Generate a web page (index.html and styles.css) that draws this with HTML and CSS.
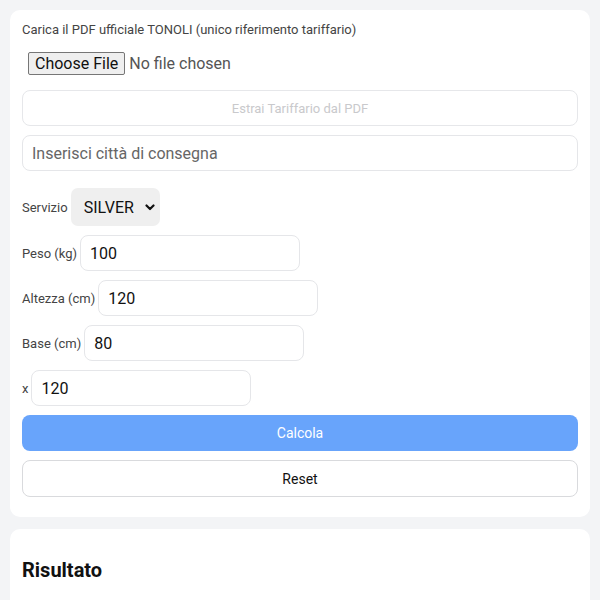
FILE: index.html
```html
<!DOCTYPE html>
<html lang="it">
<head>
<meta charset="utf-8">
<title>Tariffario TONOLI</title>
<link rel="stylesheet" href="styles.css">
</head>
<body>
<main class="page">
  <section class="card form">
    <label class="top-label" for="pdf">Carica il PDF ufficiale TONOLI (unico riferimento tariffario)</label>
    <input class="file" id="pdf" type="file" accept="application/pdf">
    <button class="btn btn-ghost" type="button" disabled>Estrai Tariffario dal PDF</button>
    <input class="field field-full" type="text" placeholder="Inserisci città di consegna">

    <div class="row row-first">
      <label class="lbl" for="srv">Servizio</label>
      <span class="select-wrap">
        <select class="select" id="srv">
          <option>SILVER</option>
          <option>GOLD</option>
        </select>
        <svg class="chev" width="10" height="7" viewBox="0 0 10 7" aria-hidden="true"><path d="M1.5 1.5 L5 5 L8.5 1.5" fill="none" stroke="#111" stroke-width="2.2" stroke-linecap="round" stroke-linejoin="round"/></svg>
      </span>
    </div>
    <div class="row">
      <label class="lbl" for="peso">Peso (kg)</label>
      <input class="field field-num" id="peso" type="text" value="100">
    </div>
    <div class="row">
      <label class="lbl" for="alt">Altezza (cm)</label>
      <input class="field field-num" id="alt" type="text" value="120">
    </div>
    <div class="row">
      <label class="lbl" for="base">Base (cm)</label>
      <input class="field field-num" id="base" type="text" value="80">
    </div>
    <div class="row">
      <label class="lbl" for="prof">x</label>
      <input class="field field-num" id="prof" type="text" value="120">
    </div>

    <button class="btn btn-primary" type="button">Calcola</button>
    <button class="btn btn-outline" type="button">Reset</button>
  </section>

  <section class="card result">
    <h2 class="result-title">Risultato</h2>
  </section>
</main>
</body>
</html>
```
FILE: styles.css
```css
* { box-sizing: border-box; }

html, body {
  margin: 0;
  padding: 0;
  background: #f3f4f6;
  font-family: Roboto, "Liberation Sans", Arial, sans-serif;
  color: #111;
}

.page {
  padding: 10px;
  display: flex;
  flex-direction: column;
  gap: 12px;
}

.card {
  background: #fff;
  border-radius: 10px;
  padding: 12px;
}

.form {
  display: flex;
  flex-direction: column;
  align-items: stretch;
  gap: 9px;
  padding-bottom: 20px;
}

.top-label {
  font-size: 13px;
  line-height: 15px;
  color: #444;
}

.file {
  font-family: Roboto, "Liberation Sans", Arial, sans-serif;
  font-size: 16px;
  padding: 6px;
  color: #555;
  align-self: flex-start;
}

.file::file-selector-button {
  font-family: Roboto, "Liberation Sans", Arial, sans-serif;
  font-size: 16px;
  color: #111;
  background: #efefef;
  border: 1px solid #767676;
  border-radius: 2px;
  padding: 1px 6px;
  margin-right: 4px;
}

.btn {
  width: 100%;
  height: 36px;
  border-radius: 8px;
  font-family: Roboto, "Liberation Sans", Arial, sans-serif;
  font-size: 14px;
  cursor: pointer;
}

.btn-ghost {
  background: #fff;
  border: 1px solid #e6e7ea;
  color: #c9c9cc;
  font-size: 13px;
}

.btn-primary {
  background: #68a4fb;
  border: none;
  color: #fff;
}

.btn-outline {
  background: #fff;
  border: 1px solid #d9dadd;
  color: #111;
  height: 37px;
}

.field {
  height: 36px;
  border: 1px solid #e5e6e9;
  border-radius: 8px;
  padding: 0 9px;
  font-family: Roboto, "Liberation Sans", Arial, sans-serif;
  font-size: 16px;
  color: #111;
  background: #fff;
  outline: none;
}

.field::placeholder {
  color: #666;
}

.field-full {
  width: 100%;
}

.field-num {
  width: 220px;
}

.row {
  display: flex;
  align-items: center;
  gap: 3px;
}

.row-first {
  margin-top: 8px;
}

.lbl {
  font-size: 13px;
  color: #444;
}

.select-wrap {
  position: relative;
  display: inline-flex;
}

.select {
  appearance: none;
  -webkit-appearance: none;
  width: 89px;
  height: 38px;
  border: none;
  border-radius: 7px;
  background: #efefef;
  padding: 0 0 0 13px;
  font-family: Roboto, "Liberation Sans", Arial, sans-serif;
  font-size: 16px;
  color: #111;
}

.chev {
  position: absolute;
  right: 5px;
  top: 16px;
  pointer-events: none;
}

.result {
  min-height: 100px;
}

.result-title {
  margin: 17px 0 0;
  font-size: 20px;
  line-height: 24px;
  font-weight: 700;
  color: #111;
}
```
